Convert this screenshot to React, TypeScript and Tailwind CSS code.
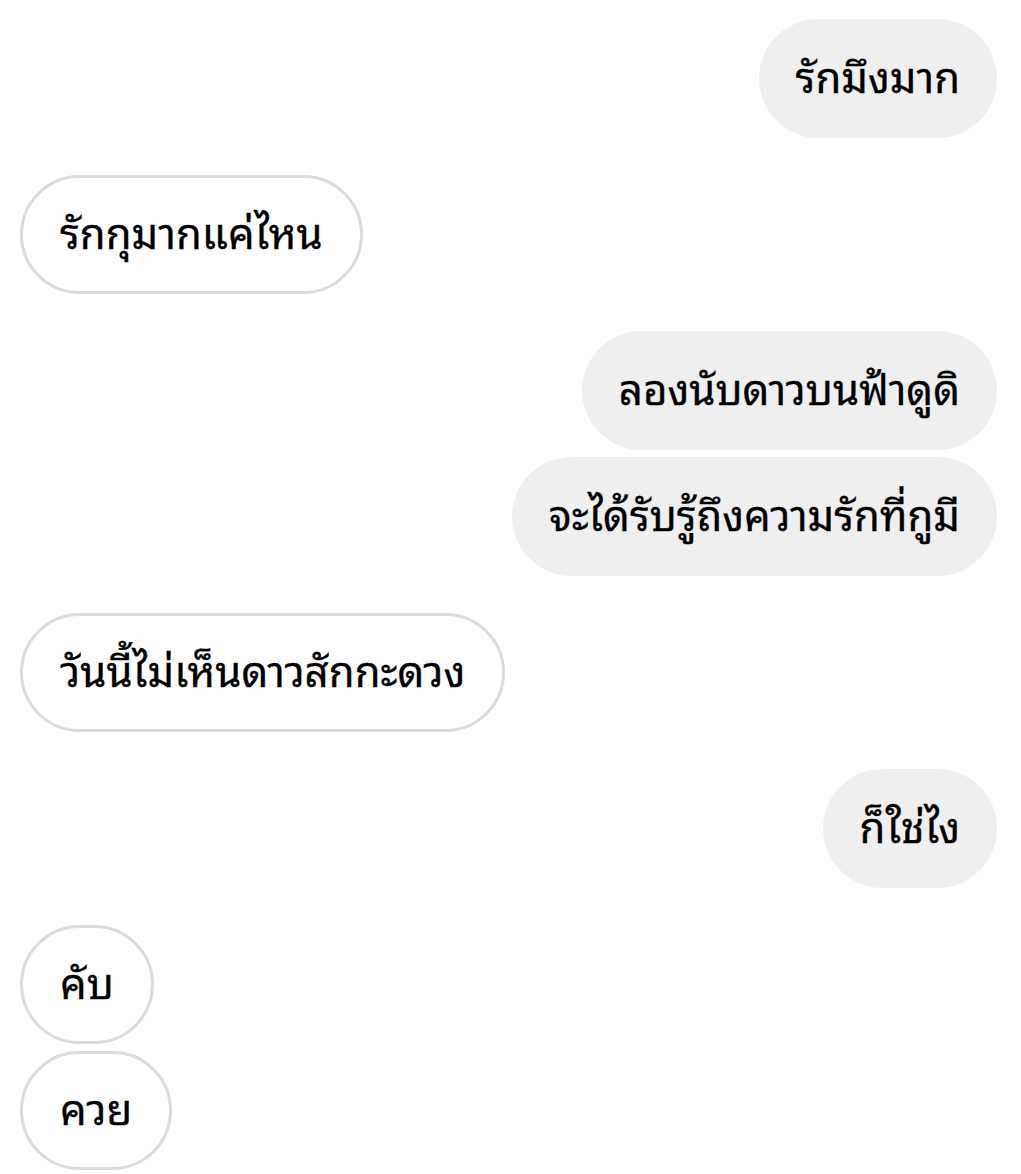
type Message = {
  text: string;
  mine: boolean;
  // ต่อจากข้อความก่อนหน้าของคนเดียวกัน
  tight?: boolean;
};

const MESSAGES: Message[] = [
  { text: 'รักมึงมาก', mine: true },
  { text: 'รักกุมากแค่ไหน', mine: false },
  { text: 'ลองนับดาวบนฟ้าดูดิ', mine: true },
  { text: 'จะได้รับรู้ถึงความรักที่กูมี', mine: true, tight: true },
  { text: 'วันนี้ไม่เห็นดาวสักกะดวง', mine: false },
  { text: 'ก็ใช่ไง', mine: true },
  { text: 'คับ', mine: false },
  { text: 'ควย', mine: false, tight: true },
];

function Bubble({ text, mine, tight }: Message) {
  return (
    <div
      className={`flex ${mine ? 'justify-end' : 'justify-start'} ${
        tight ? 'mt-[7px]' : 'mt-[37px] first:mt-0'
      }`}
    >
      <div
        className={`flex h-[119px] items-center rounded-full px-[37px] pb-[9px] text-[42px] font-normal leading-none text-black [-webkit-text-stroke:0.3px_black] ${
          mine
            ? 'bg-[#efefef]'
            : 'border-[3px] border-[#dbdbdb] bg-white px-[34px]'
        }`}
      >
        {text}
      </div>
    </div>
  );
}

export default function App() {
  return (
    <div className="flex min-h-screen flex-col bg-white pt-[19px] pl-[20px] pr-[24px] pb-[4px] font-['Noto_Sans_Thai_Looped','Noto_Sans_Thai',sans-serif]">
      {MESSAGES.map(m => (
        <Bubble key={m.text} {...m} />
      ))}
    </div>
  );
}
